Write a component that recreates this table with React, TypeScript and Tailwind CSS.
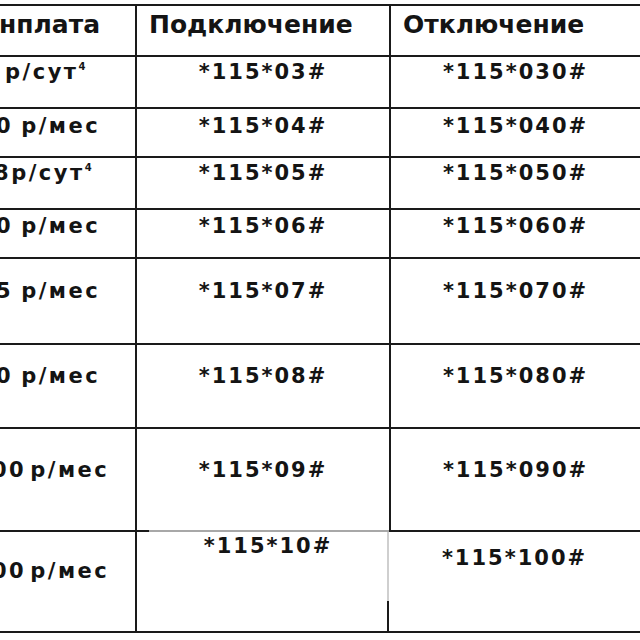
const FONT = "font-['DejaVu_Sans',Verdana,sans-serif] font-bold text-[#141414]";

type Row = {
  h: string;
  left: React.ReactNode;
  pad: string;
  mid: string;
  right: string;
};

const Sup = () => <span className="align-top text-[10px] leading-none">4</span>;

function Price({ lead, ml, gap, unit }: { lead: string; ml: string; gap: string; unit: React.ReactNode }) {
  return (
    <>
      <span className={ml}>{lead}</span>
      <span className={gap}>{unit}</span>
    </>
  );
}

const ROWS: Row[] = [
  { h: "h-[52px]", left: <span className="ml-[5px]">р/сут<Sup /></span>, pad: "pt-[5px]", mid: "*115*03#", right: "*115*030#" },
  { h: "h-[49px]", left: <Price lead="0" ml="ml-[-4px]" gap="ml-[8px]" unit="р/мес" />, pad: "pt-[7px]", mid: "*115*04#", right: "*115*040#" },
  { h: "h-[52px]", left: <Price lead="8" ml="ml-[-6px]" gap="ml-[0px]" unit={<>р/сут<Sup /></>} />, pad: "pt-[5px]", mid: "*115*05#", right: "*115*050#" },
  { h: "h-[49px]", left: <Price lead="0" ml="ml-[-4px]" gap="ml-[8px]" unit="р/мес" />, pad: "pt-[6px]", mid: "*115*06#", right: "*115*060#" },
  { h: "h-[86px]", left: <Price lead="5" ml="ml-[-4px]" gap="ml-[8px]" unit="р/мес" />, pad: "pt-[22px]", mid: "*115*07#", right: "*115*070#" },
  { h: "h-[84px]", left: <Price lead="0" ml="ml-[-4px]" gap="ml-[8px]" unit="р/мес" />, pad: "pt-[21px]", mid: "*115*08#", right: "*115*080#" },
  { h: "h-[103px]", left: <Price lead="00" ml="ml-[-8px]" gap="ml-[4px]" unit="р/мес" />, pad: "pt-[31px]", mid: "*115*09#", right: "*115*090#" },
];

export default function App() {
  return (
    <div className={`w-[640px] h-[640px] overflow-hidden bg-white pt-[4px] ${FONT}`}>
      <div className="w-[660px] border-t-2 border-[#1a1a1a]">
        {/* header */}
        <div className="flex h-[51px] text-[25px] leading-none">
          <div className="w-[135px] shrink-0 overflow-hidden whitespace-nowrap border-b-2 border-[#1a1a1a] pt-[6px]">
            <span className="ml-[-1px]">нплата</span>
          </div>
          <div className="w-[254px] shrink-0 border-b-2 border-l-2 border-[#1a1a1a] pl-[12px] pt-[6px]">
            Подключение
          </div>
          <div className="flex-1 border-b-2 border-l-2 border-[#1a1a1a] pl-[12px] pt-[6px]">
            Отключение
          </div>
        </div>

        {ROWS.map((r, i) => (
          <div key={i} className={`flex ${r.h} text-[21px] leading-none`}>
            <div className={`w-[135px] shrink-0 overflow-hidden whitespace-nowrap border-b-2 border-[#1a1a1a] tracking-[2.5px] ${r.pad}`}>
              {r.left}
            </div>
            <div className={`w-[254px] shrink-0 border-l-2 border-[#1a1a1a] text-center tracking-[2px] ${r.pad} ${i === 6 ? "flex flex-col" : "border-b-2"}`}>
              <div className="flex-1">{r.mid}</div>
              {i === 6 && (
                <div className="flex h-[2px]">
                  <div className="w-[12px] bg-[#1a1a1a]" />
                  <div className="flex-1 bg-[#a8a8a8]" />
                </div>
              )}
            </div>
            <div className={`flex-1 border-b-2 border-l-2 border-[#1a1a1a] pr-[20px] text-center tracking-[2px] ${r.pad}`}>
              {r.right}
            </div>
          </div>
        ))}

        {/* last row with lighter rules */}
        <div className="flex h-[101px] text-[21px] leading-none">
          <div className="w-[135px] shrink-0 overflow-hidden whitespace-nowrap border-b-2 border-[#1a1a1a] tracking-[2.5px] pt-[29px]">
            <Price lead="00" ml="ml-[-8px]" gap="ml-[4px]" unit="р/мес" />
          </div>
          <div className="w-[252px] shrink-0 border-b-2 border-l-2 border-[#1a1a1a] pl-[12px] pt-[4px] text-center tracking-[2px]">
            *115*10#
          </div>
          <div className="flex w-[2px] shrink-0 flex-col border-b-2 border-[#1a1a1a]">
            <div className="h-[69px] bg-[#cfcfcf]" />
            <div className="flex-1 bg-[#1a1a1a]" />
          </div>
          <div className="flex-1 border-b-2 border-[#1a1a1a] pr-[20px] pt-[16px] text-center tracking-[2px]">
            *115*100#
          </div>
        </div>
      </div>
    </div>
  );
}
